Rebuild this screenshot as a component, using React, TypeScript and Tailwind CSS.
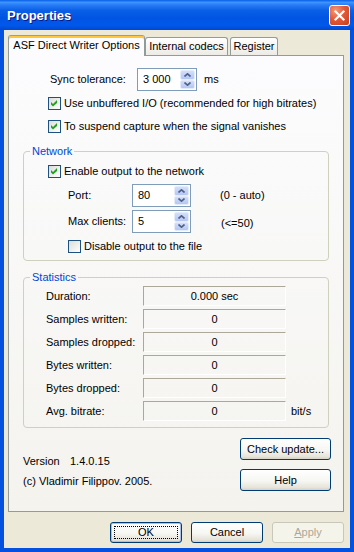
import type { ReactNode } from "react";

function CheckBox({ checked }: { checked: boolean }) {
    return (
        <span className="flex h-[13px] w-[13px] shrink-0 items-center justify-center border border-[#1C5180] bg-linear-to-br from-[#DCDCD7] to-white">
            {checked && (
                <svg width="11" height="11" viewBox="0 0 11 11">
                    <polygon points="2,4 4,6 8,2 8,5 4,8.5 2,6.5" fill="#21A121" />
                </svg>
            )}
        </span>
    );
}

function CheckRow({ checked, label, className }: { checked: boolean; label: string; className: string }) {
    return (
        <div className={`flex h-[13px] items-center gap-[3px] ${className}`}>
            <CheckBox checked={checked} />
            <span>{label}</span>
        </div>
    );
}

function SpinArrow({ up }: { up?: boolean }) {
    return (
        <span className="flex flex-1 items-center justify-center rounded-[2px] border border-[#E4ECFC] bg-linear-to-b from-[#D3DEFA] to-[#B4C6F3]">
            <svg width="7" height="4" viewBox="0 0 7 4">
                <polyline
                    points={up ? "0.5,3.5 3.5,0.8 6.5,3.5" : "0.5,0.5 3.5,3.2 6.5,0.5"}
                    fill="none"
                    stroke="#4D6185"
                    strokeWidth="1.6"
                />
            </svg>
        </span>
    );
}

function Spin({ value, className }: { value: string; className: string }) {
    return (
        <div className={`flex h-[23px] items-stretch border border-[#7F9DB9] bg-white ${className}`}>
            <span className="flex flex-1 items-center pl-[5px]">{value}</span>
            <div className="my-px mr-px flex w-[15px] flex-col">
                <SpinArrow up />
                <SpinArrow />
            </div>
        </div>
    );
}

function Group({ title, children, className }: { title: string; children: ReactNode; className: string }) {
    return (
        <fieldset className={`mx-[14px] rounded-[4px] border border-[#D0D0BF] ${className}`}>
            <legend className="ml-[6px] px-[2px] text-[#0046D5]">{title}</legend>
            {children}
        </fieldset>
    );
}

function StatRow({ label, value, unit }: { label: string; value: string; unit?: string }) {
    return (
        <div className="flex h-[20px] items-center">
            <span className="w-[119px] shrink-0 whitespace-nowrap pl-[22px]">{label}</span>
            <div className="flex h-[20px] w-[143px] items-center justify-center border border-t-[#ACA899] border-l-[#ACA899] border-r-white border-b-white">
                {value}
            </div>
            {unit && <span className="ml-[5px]">{unit}</span>}
        </div>
    );
}

function XpButton({ children, className }: { children: ReactNode; className: string }) {
    return (
        <button className={`relative flex items-center justify-center rounded-[3px] border border-[#003C74] bg-[linear-gradient(180deg,#FFFFFF_0%,#F6F6F2_55%,#E6E3D9_88%,#D6D0C5_100%)] ${className}`}>
            {children}
        </button>
    );
}

export default function App() {
    return (
        <div className="flex h-[552px] w-[354px] flex-col bg-[#0451E0] font-['Liberation_Sans',Arial,sans-serif] text-[11px] leading-[13px] text-black">
            {/* title bar */}
            <div className="flex h-[30px] shrink-0 items-center bg-[linear-gradient(180deg,#0A5FE8_0%,#3D95FF_8%,#2A7CF5_16%,#0A5FE6_35%,#0054E3_60%,#0058EA_85%,#0046D2_100%)] pl-[7px] pr-[4px]">
                <span className="flex-1 text-[13px] font-bold text-white [text-shadow:1px_1px_0_#0A1883]">Properties</span>
                <div className="flex h-[21px] w-[21px] items-center justify-center rounded-[3px] border border-white bg-[radial-gradient(circle_at_30%_25%,#F39A78_0%,#E2593A_45%,#C83E1C_100%)]">
                    <svg width="19" height="19" viewBox="0 0 19 19">
                        <path d="M5.5 5.5 L13.5 13.5 M13.5 5.5 L5.5 13.5" stroke="white" strokeWidth="2.2" strokeLinecap="square" />
                    </svg>
                </div>
            </div>

            {/* client area */}
            <div className="mx-[4px] mb-[4px] flex flex-1 flex-col bg-[#ECE9D8] pl-[4px] pr-[6px] pt-[5px] pb-[5px]">
                {/* tabs */}
                <div className="relative z-10 flex items-end">
                    <div className="-mb-px flex h-[21px] w-[137px] items-center justify-center rounded-t-[3px] border-x border-t border-x-[#919B9C] border-t-[#E68B2C] bg-[#FCFCFE] pb-[2px] shadow-[inset_0_2px_0_#FFC73C]">
                        ASF Direct Writer Options
                    </div>
                    <div className="flex h-[18px] w-[83px] items-center justify-center rounded-t-[3px] border-x border-t border-[#919B9C] bg-linear-to-b from-white to-[#ECEBE6]">
                        Internal codecs
                    </div>
                    <div className="ml-[2px] flex h-[18px] w-[48px] items-center justify-center rounded-t-[3px] border-x border-t border-[#919B9C] bg-linear-to-b from-white to-[#ECEBE6]">
                        Register
                    </div>
                </div>

                {/* panel */}
                <div className="flex flex-1 flex-col border border-[#919B9C] bg-linear-to-b from-[#FCFCFE] to-[#F4F3EE]">
                    <div className="mt-[12px] flex items-center pl-[41px]">
                        <span className="w-[87px]">Sync tolerance:</span>
                        <Spin value="3 000" className="w-[60px]" />
                        <span className="ml-[7px]">ms</span>
                    </div>
                    <CheckRow checked label="Use unbuffered I/O (recommended for high bitrates)" className="ml-[39px] mt-[6px]" />
                    <CheckRow checked label="To suspend capture when the signal vanishes" className="ml-[39px] mt-[10px]" />

                    <Group title="Network" className="mt-[12px] pb-[7px]">
                        <CheckRow checked label="Enable output to the network" className="ml-[24px] mt-[7px]" />
                        <div className="mt-[6px] flex items-center pl-[44px]">
                            <span className="w-[64px]">Port:</span>
                            <Spin value="80" className="w-[59px]" />
                            <span className="ml-[29px]">(0 - auto)</span>
                        </div>
                        <div className="mt-[3px] flex items-center pl-[44px]">
                            <span className="w-[64px]">Max clients:</span>
                            <Spin value="5" className="w-[59px]" />
                            <span className="ml-[30px] mt-[3px]">(&lt;=50)</span>
                        </div>
                        <CheckRow checked={false} label="Disable output to the file" className="ml-[44px] mt-[7px]" />
                    </Group>

                    <Group title="Statistics" className="mt-[10px] pb-[6px]">
                        <div className="mt-[2px] flex flex-col gap-[3px]">
                            <StatRow label="Duration:" value="0.000 sec" />
                            <StatRow label="Samples written:" value="0" />
                            <StatRow label="Samples dropped:" value="0" />
                            <StatRow label="Bytes written:" value="0" />
                            <StatRow label="Bytes dropped:" value="0" />
                            <StatRow label="Avg. bitrate:" value="0" unit="bit/s" />
                        </div>
                    </Group>

                    <div className="mt-[10px] flex pl-[14px] pr-[12px]">
                        <div className="flex flex-1 flex-col pt-[17px]">
                            <div className="flex">
                                <span className="w-[47px]">Version</span>
                                <span>1.4.0.15</span>
                            </div>
                            <span className="mt-[7px]">(c) Vladimir Filippov. 2005.</span>
                        </div>
                        <div className="flex w-[91px] flex-col gap-[9px]">
                            <XpButton className="h-[22px] w-[91px]">Check update...</XpButton>
                            <XpButton className="h-[22px] w-[91px]">Help</XpButton>
                        </div>
                    </div>
                </div>

                {/* dialog buttons */}
                <div className="mt-[10px] flex justify-end gap-[9px]">
                    <XpButton className="h-[21px] w-[72px] shadow-[inset_0_0_0_1px_#A7C0EC]">
                        <span className="absolute inset-[3px] border border-dotted border-black" />
                        OK
                    </XpButton>
                    <XpButton className="h-[21px] w-[72px]">Cancel</XpButton>
                    <button className="flex h-[21px] w-[72px] items-center justify-center rounded-[3px] border border-[#C9C7BA] bg-[#F5F4EA] text-[#ACA899]">
                        <span>
                            <span className="underline">A</span>pply
                        </span>
                    </button>
                </div>
            </div>
        </div>
    );
}
